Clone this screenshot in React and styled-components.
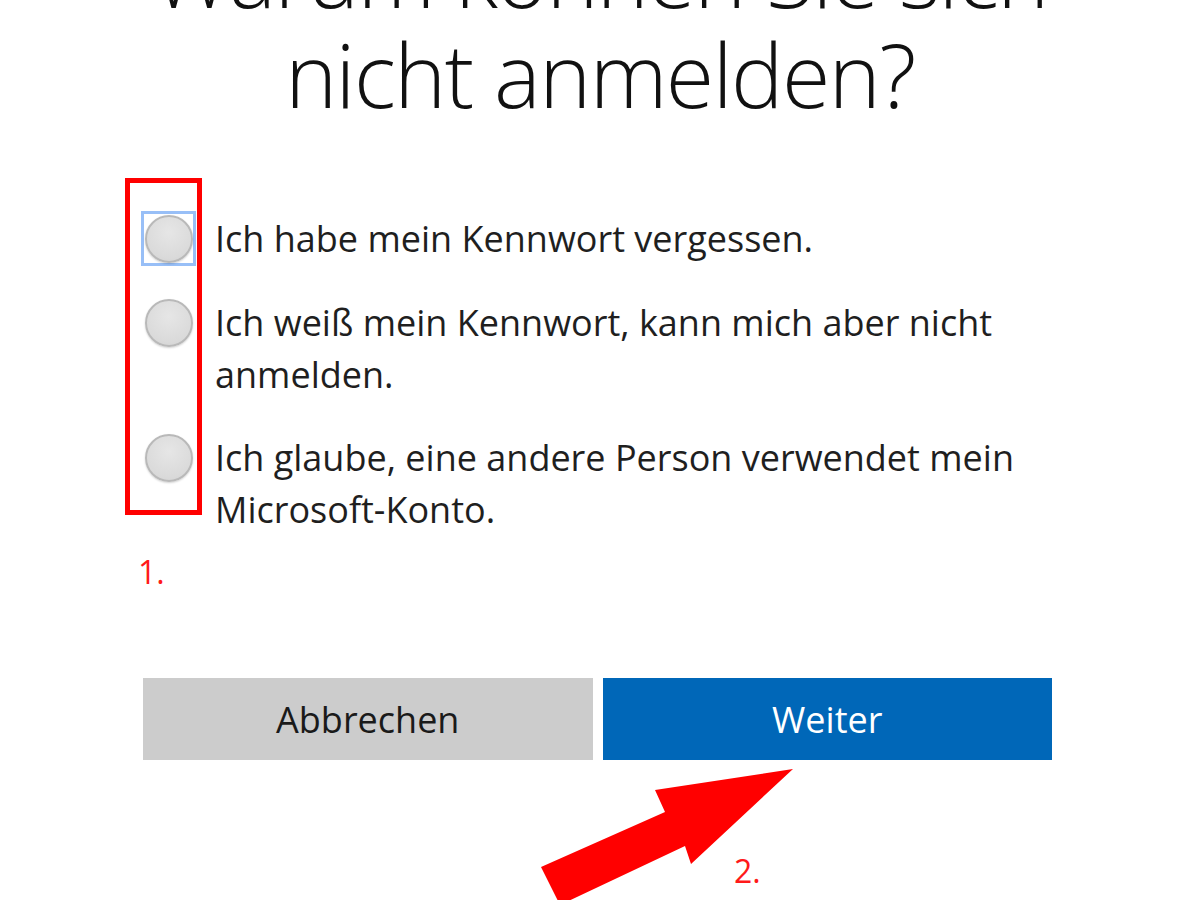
import React from "react";
import styled, { createGlobalStyle } from "styled-components";

const GlobalStyle = createGlobalStyle`
  html, body { margin: 0; padding: 0; background: #ffffff; }
  body { font-family: "Open Sans", "Noto Sans", sans-serif; }
  * { box-sizing: border-box; }
`;

const Page = styled.div`
  position: relative;
  width: 1200px;
  height: 900px;
  overflow: hidden;
  background: #ffffff;
  color: #1a1a1a;
`;

const Title = styled.h1`
  margin: -76px 0 0;
  font-family: "Open Sans", "Noto Sans", sans-serif;
  font-weight: 300;
  font-size: 88px;
  line-height: 100px;
  letter-spacing: -1.5px;
  text-align: center;
  color: #111111;
`;

const Content = styled.div`
  padding: 0 148px 0 141px;
`;

const Options = styled.div`
  display: flex;
  flex-direction: column;
  gap: 31px;
  margin-top: 89px;
`;

const Option = styled.label`
  display: grid;
  grid-template-columns: 55px 1fr;
  column-gap: 19px;
  align-items: start;
  font-size: 36px;
  line-height: 52px;
  color: #1f1f1f;
`;

const RadioCell = styled.span`
  width: 55px;
  height: 55px;
  margin-top: -2px;
  display: flex;
  align-items: center;
  justify-content: center;
  border: 3px solid ${(p) => (p.$focused ? "#98bff7" : "transparent")};
`;

const RadioDot = styled.span`
  width: 48px;
  height: 48px;
  border-radius: 50%;
  border: 2px solid #b9b9b9;
  background: radial-gradient(circle at 50% 35%, #e6e6e6 0%, #dadada 70%, #d0d0d0 100%);
  box-shadow: 0 1px 2px rgba(0, 0, 0, 0.18);
`;

const StepLabel = styled.div`
  font-family: "Open Sans", "Noto Sans", sans-serif;
  font-size: 32px;
  line-height: 1;
  color: #ff1a1a;
`;

const StepOne = styled(StepLabel)`
  margin: 20px 0 0 -3px;
`;

const Buttons = styled.div`
  display: grid;
  grid-template-columns: 1fr 1fr;
  gap: 10px;
  margin: 90px 0 0 2px;
`;

const Button = styled.button`
  height: 82px;
  border: none;
  font-family: "Open Sans", "Noto Sans", sans-serif;
  font-size: 36px;
  background: ${(p) => (p.$primary ? "#0067b8" : "#cccccc")};
  color: ${(p) => (p.$primary ? "#ffffff" : "#1a1a1a")};
  padding: 0;
  cursor: pointer;
`;

const Highlight = styled.div`
  position: absolute;
  left: 125px;
  top: 178px;
  width: 77px;
  height: 337px;
  border: 5px solid #ff0000;
  pointer-events: none;
`;

const StepTwo = styled(StepLabel)`
  position: absolute;
  left: 734px;
  top: 855px;
`;

const ArrowSvg = styled.svg`
  position: absolute;
  left: 0;
  top: 0;
  pointer-events: none;
`;

const options = [
  "Ich habe mein Kennwort vergessen.",
  "Ich weiß mein Kennwort, kann mich aber nicht anmelden.",
  "Ich glaube, eine andere Person verwendet mein Microsoft-Konto.",
];

export default function App() {
  return (
    <Page>
      <GlobalStyle />
      <Title>
        Warum können Sie sich
        <br />
        nicht anmelden?
      </Title>
      <Content>
        <Options>
          {options.map((text, i) => (
            <Option key={i}>
              <RadioCell $focused={i === 0}>
                <RadioDot />
              </RadioCell>
              <span>{text}</span>
            </Option>
          ))}
        </Options>
        <StepOne>1.</StepOne>
        <Buttons>
          <Button>Abbrechen</Button>
          <Button $primary>Weiter</Button>
        </Buttons>
      </Content>
      <Highlight />
      <StepTwo>2.</StepTwo>
      <ArrowSvg width="1200" height="900" viewBox="0 0 1200 900">
        <polygon
          points="793,769 655,790 665,812 541,867 560,905 685,846 691,864"
          fill="#ff0000"
        />
      </ArrowSvg>
    </Page>
  );
}
